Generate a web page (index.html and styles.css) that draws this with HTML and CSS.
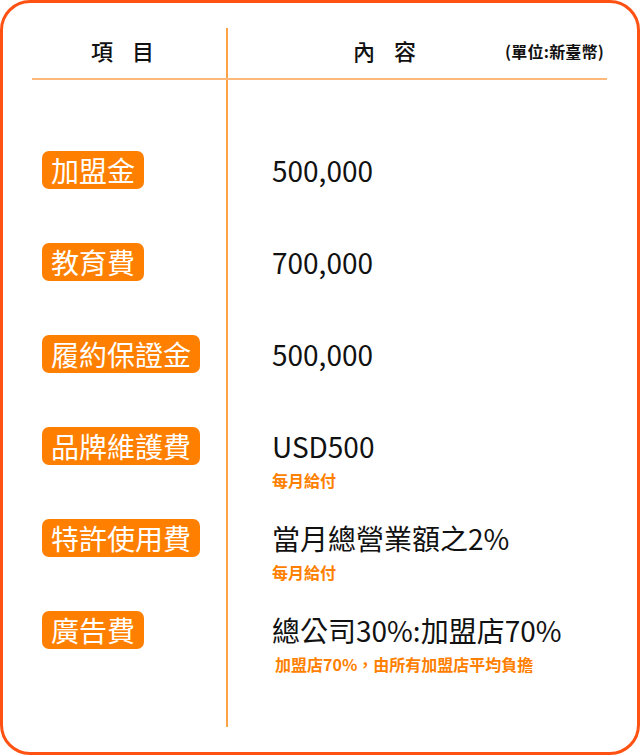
FILE: index.html
```html
<!DOCTYPE html>
<html lang="zh-Hant">
<head>
<meta charset="utf-8">
<link rel="stylesheet" href="styles.css">
</head>
<body>
<div class="card">
  <div class="table">
    <div class="head">
      <div class="hcell hcell-item"><span>項</span><span>目</span></div>
      <div class="hcell hcell-content">
        <div class="hpair"><span>內</span><span>容</span></div>
        <div class="unit">(單位:新臺幣)</div>
      </div>
    </div>
    <div class="body">
      <div class="col col-left">
        <div class="row"><span class="badge">加盟金</span></div>
        <div class="row"><span class="badge">教育費</span></div>
        <div class="row"><span class="badge">履約保證金</span></div>
        <div class="row"><span class="badge">品牌維護費</span></div>
        <div class="row"><span class="badge">特許使用費</span></div>
        <div class="row"><span class="badge">廣告費</span></div>
      </div>
      <div class="col col-right">
        <div class="row"><div class="val">500,000</div></div>
        <div class="row"><div class="val">700,000</div></div>
        <div class="row"><div class="val">500,000</div></div>
        <div class="row"><div class="val">USD500</div><div class="note">每月給付</div></div>
        <div class="row"><div class="val">當月總營業額之2%</div><div class="note">每月給付</div></div>
        <div class="row"><div class="val">總公司30%:加盟店70%</div><div class="note note-indent">加盟店70%，由所有加盟店平均負擔</div></div>
      </div>
    </div>
  </div>
</div>
</body>
</html>
```
FILE: styles.css
```css
* { box-sizing: border-box; }
html, body { margin: 0; padding: 0; background: #fff; }
body {
  font-family: "Noto Sans CJK TC", "Noto Sans", sans-serif;
  color: #111;
}
.card {
  width: 640px;
  height: 755px;
  border: 3px solid #ff5212;
  border-radius: 30px;
  padding: 25px 30px 0 29px;
  background: #fff;
}
.table { width: 575px; }
.head {
  display: flex;
  height: 52px;
  border-bottom: 2px solid #fdb97c;
}
.hcell {
  display: flex;
  align-items: center;
  padding-bottom: 6px;
  font-size: 22px;
  font-weight: 500;
}
.hcell-item {
  width: 194px;
  padding-left: 59px;
  gap: 19px;
}
.hcell-content {
  flex: 1;
  border-left: 2px solid #ffa145;
  padding-left: 125px;
  justify-content: space-between;
}
.hpair { display: flex; gap: 19px; }
.unit {
  font-size: 16px;
  font-weight: 700;
  margin-right: 3px;
  letter-spacing: 0.2px;
  padding-top: 2px;
}
.body {
  display: flex;
  height: 647px;
}
.col { padding-top: 71px; }
.col-left { width: 194px; padding-left: 10px; }
.col-right {
  flex: 1;
  border-left: 2px solid #ffa145;
  padding-left: 44px;
}
.row { height: 92px; }
.badge {
  display: inline-block;
  height: 38px;
  line-height: 38px;
  padding: 0 9px;
  background: #ff8000;
  color: #fff;
  border-radius: 7px;
  font-size: 28px;
  font-weight: 400;
}
.val {
  height: 38px;
  line-height: 38px;
  font-size: 28px;
  font-weight: 400;
  color: #111;
}
.note {
  margin-top: 5px;
  line-height: 20px;
  font-size: 16px;
  font-weight: 700;
  color: #ff7f00;
}
.note-indent { padding-left: 3px; }
```
